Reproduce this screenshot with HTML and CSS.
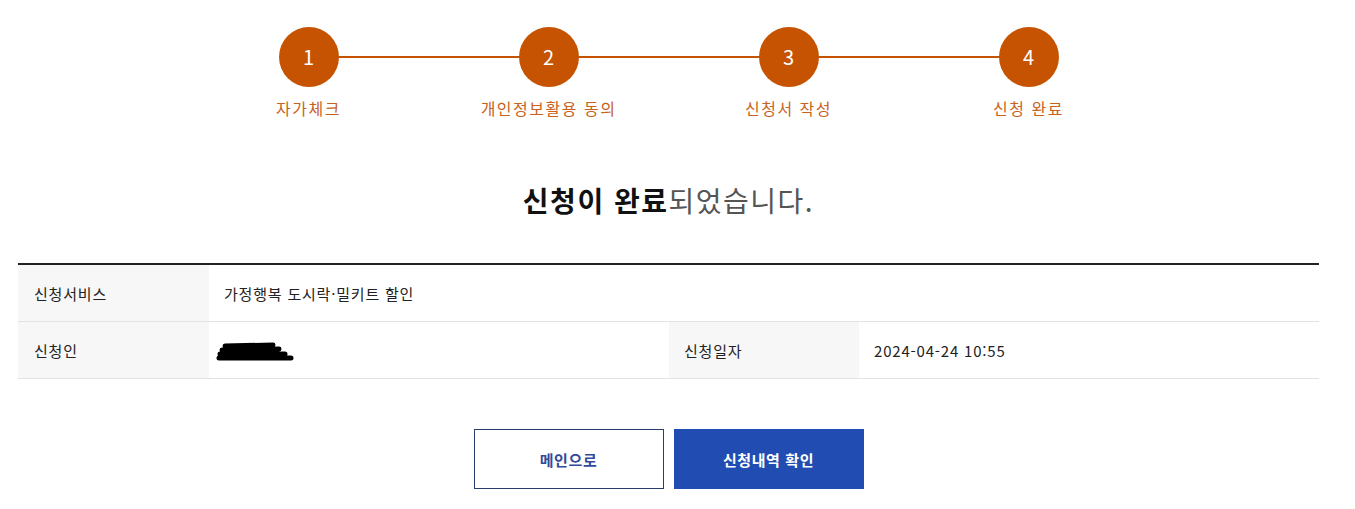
FILE: index.html
```html
<!DOCTYPE html>
<html lang="ko">
<head>
    <meta charset="UTF-8">
    <meta name="viewport" content="width=device-width, initial-scale=1.0">
    <title>신청 완료</title>
    <link rel="stylesheet" href="styles.css">
</head>
<body>
    <div class="page">
        <ol class="steps">
            <li class="step"><span class="num">1</span><span class="label">자가체크</span></li>
            <li class="step"><span class="num">2</span><span class="label">개인정보활용 동의</span></li>
            <li class="step"><span class="num">3</span><span class="label">신청서 작성</span></li>
            <li class="step"><span class="num">4</span><span class="label">신청 완료</span></li>
        </ol>

        <h1 class="done-title"><strong>신청이 완료</strong>되었습니다.</h1>

        <div class="info-table">
            <div class="cell head">신청서비스</div>
            <div class="cell wide">가정행복 도시락·밀키트 할인</div>
            <div class="cell head">신청인</div>
            <div class="cell">
                <svg class="redact" width="84" height="20" viewBox="0 0 84 20">
                    <path d="M12 4 L60 3 M9 8 L66 7 M7 12 L72 12 M6 16 L78 16" stroke="#000" stroke-width="5" stroke-linecap="round" fill="none"/>
                </svg>
            </div>
            <div class="cell head second">신청일자</div>
            <div class="cell">2024-04-24 10:55</div>
        </div>

        <div class="buttons">
            <a class="btn btn-line" href="#">메인으로</a>
            <a class="btn btn-fill" href="#">신청내역 확인</a>
        </div>
    </div>
</body>
</html>
```
FILE: styles.css
```css
:root {
    --accent: #c65302;
    --accent-text: #c8621c;
    --navy: #2b3d6e;
    --blue: #214cb1;
    --line: #e2e2e2;
    --head-bg: #f7f7f7;
}

* {
    margin: 0;
    padding: 0;
    box-sizing: border-box;
}

body {
    font-family: 'Noto Sans CJK KR', 'Noto Sans', sans-serif;
    color: #222;
    background: #fff;
}

.page {
    width: 1301px;
    margin-left: 18px;
    padding-top: 27px;
}

/* step indicator */
.steps {
    list-style: none;
    display: flex;
    width: 960px;
    margin: 0 auto;
    position: relative;
}

.steps::before {
    content: '';
    position: absolute;
    left: 120px;
    right: 120px;
    top: 29px;
    height: 2px;
    background: var(--accent);
}

.step {
    width: 240px;
    display: flex;
    flex-direction: column;
    align-items: center;
    position: relative;
}

.step .num {
    width: 60px;
    height: 60px;
    border-radius: 50%;
    background: var(--accent);
    color: #fff;
    font-size: 20px;
    line-height: 60px;
    text-align: center;
}

.step .label {
    margin-top: 9px;
    font-size: 16px;
    line-height: 24px;
    letter-spacing: 1.5px;
    color: var(--accent-text);
}

.done-title {
    margin-top: 60px;
    text-align: center;
    font-size: 28px;
    line-height: 40px;
    font-weight: 400;
    letter-spacing: 1.5px;
    color: #555;
}

.done-title strong {
    font-weight: 700;
    color: #111;
}

/* result table */
.info-table {
    margin-top: 43px;
    border-top: 2px solid #222;
    display: grid;
    grid-template-columns: 191px 460px 190px 1fr;
}

.cell {
    height: 57px;
    border-bottom: 1px solid var(--line);
    display: flex;
    align-items: center;
    padding-left: 15px;
    font-size: 15px;
    letter-spacing: 0.8px;
    color: #222;
}

.cell.head {
    background: var(--head-bg);
    padding-left: 16px;
}

.cell.head.second {
    padding-left: 15px;
}

.cell.wide {
    grid-column: span 3;
}

.redact {
    margin-left: -11px;
    margin-top: 4px;
}

/* buttons */
.buttons {
    margin-top: 50px;
    display: flex;
    justify-content: center;
    gap: 10px;
}

.btn {
    width: 190px;
    height: 60px;
    display: flex;
    align-items: center;
    justify-content: center;
    font-size: 15px;
    font-weight: 700;
    letter-spacing: 0.6px;
    text-decoration: none;
}

.btn-line {
    border: 1px solid var(--navy);
    color: #33499a;
    background: #fff;
}

.btn-fill {
    background: var(--blue);
    color: #fff;
}
```
